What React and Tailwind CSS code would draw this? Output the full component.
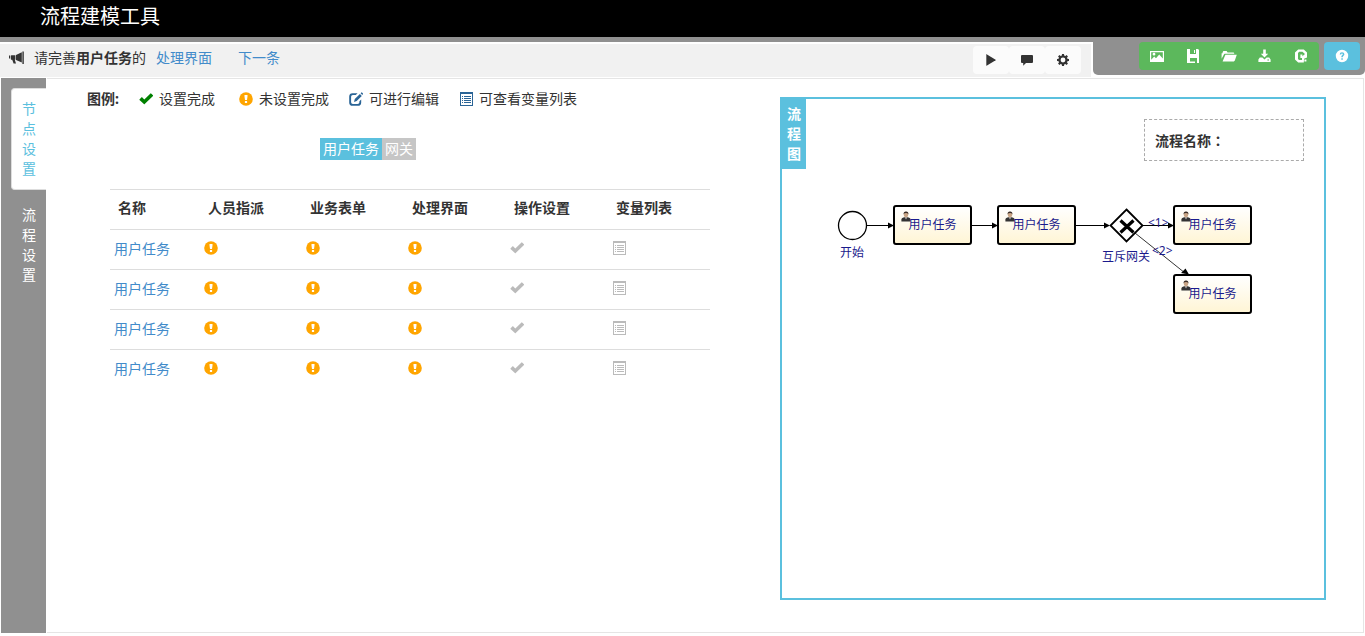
import React from "react";

function Icon({ className = "", children }) {
  return (
    <svg
      viewBox="0 0 14 14"
      aria-hidden="true"
      className={`block size-3.5 shrink-0 fill-current ${className}`}
    >
      {children}
    </svg>
  );
}

const OkIcon = ({ className }) => (
  <Icon className={className}>
    <path d="M0.5 7.4 2.5 5.3Q2.8 5 3.1 5.3L5.3 7.4 11.5 1.5Q11.8 1.2 12.1 1.5L14 3.3Q14.3 3.6 14 3.9L5.7 12Q5.3 12.4 4.9 12L0.5 8Q0.2 7.7 0.5 7.4Z" />
  </Icon>
);

const AlertIcon = ({ className }) => (
  <Icon className={className}>
    <circle cx="7" cy="7" r="6.8" />
    <path fill="#fff" d="M5.5 3H8.5V4.6L8 8H6L5.5 4.6ZM5.9 9H8.1V11H5.9Z" />
  </Icon>
);

const EditIcon = ({ className }) => (
  <Icon className={className}>
    <path d="M8.6 1.2H3.6Q0.2 1.2 0.2 4.6V10.4Q0.2 13.8 3.6 13.8H8.8Q12.2 13.8 12.2 10.4V7.4L10.4 9.2V10.2Q10.4 12 8.6 12H3.9Q2.1 12 2.1 10.2V4.8Q2.1 3 3.9 3H6.8Z" />
    <path d="M10.9 2 12.8 3.9 7.7 9 5 9.9 5.8 7.1ZM11.6 1.3 12.4 0.5Q12.7 0.2 13 0.5L14 1.5Q14.3 1.8 14 2.1L13.3 2.9Z" />
  </Icon>
);

const ListIcon = ({ className }) => (
  <Icon className={className}>
    <path fillRule="evenodd" d="M1 0H14V14H1ZM2 2V13H13V2Z" />
    <path d="M3 4H4V5H3ZM5 4H12V5H5ZM3 6H4V7H3ZM5 6H12V7H5ZM3 8H4V9H3ZM5 8H12V9H5ZM3 10H4V11H3ZM5 10H12V11H5Z" />
  </Icon>
);

const HornIcon = () => (
  <svg viewBox="0 0 16 14" aria-hidden="true" className="block h-3.5 w-4 shrink-0 fill-current">
    <path d="M14.4 0.6H15.8V13H14.4Z" />
    <path d="M13.8 1.2V11.6L8 9.1V4.1ZM3.4 4.2H7.4V8.8H6.8L8 12.6H5.6L4.2 8.8H3.4Q2.9 8.8 2.9 8.2V4.8Q2.9 4.2 3.4 4.2ZM1 4.6H2.2V7.6H1Z" />
  </svg>
);

const PlayIcon = () => (
  <Icon>
    <path d="M2.6 1.3 11.6 6.7Q12 7 11.6 7.3L2.6 12.7Q2.3 12.8 2.3 12.4V1.6Q2.3 1.2 2.6 1.3Z" />
  </Icon>
);

const CommentIcon = () => (
  <Icon>
    <path d="M2 2H12Q13 2 13 3V9Q13 10 12 10H6L3.2 12.8V10H2Q1 10 1 9V3Q1 2 2 2Z" />
  </Icon>
);

const CogIcon = () => (
  <Icon>
    <path fillRule="evenodd" d="M7 2.4A4.6 4.6 0 1 1 7 11.6A4.6 4.6 0 1 1 7 2.4ZM7 4.6A2.4 2.4 0 1 0 7 9.4A2.4 2.4 0 1 0 7 4.6Z" />
    {[0, 45, 90, 135].map((angle) => (
      <path key={angle} transform={`rotate(${angle} 7 7)`} d="M6 1H8L8.3 3.2H5.7ZM5.7 10.8H8.3L8 13H6Z" />
    ))}
  </Icon>
);

const PictureIcon = () => (
  <Icon>
    <path fillRule="evenodd" d="M0 2H14V13H0ZM1.2 3.2V10.8L4.2 7.4 6 9.2 9.2 5.6 12.8 9.4V3.2ZM4 3.8A1.4 1.4 0 1 1 4 6.6A1.4 1.4 0 1 1 4 3.8Z" />
  </Icon>
);

const FloppyIcon = () => (
  <Icon>
    <path fillRule="evenodd" d="M1 0H4V5H10V0H12L13 1V14H11V9H4V14H1ZM8 1H9V4H8Z" />
    <path d="M4 12.6H9V14H4Z" />
  </Icon>
);

const FolderIcon = () => (
  <svg viewBox="0 0 16 14" aria-hidden="true" className="block h-3.5 w-4 shrink-0 fill-current">
    <path d="M0.6 9.8V4.2H1.6V3.2L2.4 2H5.6L6.6 3.4H12.4Q13.2 3.4 13.2 4.2V4.8H3.8Q3.2 4.8 2.9 5.4Z" />
    <path d="M4.4 5.8H15.8L13.8 11.6Q13.5 12.4 12.8 12.4H1.6Z" />
  </svg>
);

const SaveIcon = () => (
  <Icon>
    <path d="M5.2 0.6H7.8V4.8H10.2L6.5 8.6 2.8 4.8H5.2Z" />
    <path fillRule="evenodd" d="M1.8 8.6H4.4L6.5 10.4 8.6 8.6H11.2L12.6 10.4V13H0.4V10.4ZM9.4 10.4V11.4H11V10.4Z" />
  </Icon>
);

const ExportIcon = () => (
  <Icon>
    <path fillRule="evenodd" d="M4.2 0.4H9.8L13 3.6V8.4L10 9.8V10.4L9.8 13.6H4.2L1 10.4V3.6ZM4 4V10L5 11H8V9H6.4V5.4H8.4V7.2L11 5 8.4 2.8H5.2Z" />
    <path d="M10.4 10.6H12.4V12.6H10.4Z" />
  </Icon>
);

const QuestionIcon = () => (
  <Icon>
    <path
      fillRule="evenodd"
      d="M7 0.8A6.2 6.2 0 1 1 7 13.2A6.2 6.2 0 1 1 7 0.8ZM4.7 5.6H6.2Q6.2 4.6 7 4.6 7.8 4.6 7.8 5.3 7.8 5.7 7 6.3 6.3 6.9 6.3 8.2H7.8Q7.8 7.4 8.6 6.8 9.4 6.1 9.4 5.2 9.4 3.3 7 3.3 4.7 3.3 4.7 5.6ZM6.3 9.2H7.8V10.7H6.3Z"
    />
  </Icon>
);

const toolButtons = [
  ["运行", PlayIcon],
  ["消息", CommentIcon],
  ["设置", CogIcon],
];

const fileButtons = [
  ["图片", PictureIcon],
  ["保存", FloppyIcon],
  ["打开", FolderIcon],
  ["下载", SaveIcon],
  ["导出", ExportIcon],
];

const columns = ["名称", "人员指派", "业务表单", "处理界面", "操作设置", "变量列表"];
const rows = ["用户任务", "用户任务", "用户任务", "用户任务"];

function UserFigure() {
  return (
    <svg viewBox="0 0 10 11" aria-hidden="true" className="absolute left-1.5 top-1 h-[11px] w-2.5">
      <path d="M0.4 10.6V8.4Q0.4 6.8 2.4 6.4L5 6 7.6 6.4Q9.6 6.8 9.6 8.4V10.6Z" fill="#333" />
      <path d="M4 6.2H6L5 8.4Z" fill="#ddd" />
      <ellipse cx="5" cy="3.6" rx="2.2" ry="2.8" fill="#c9a585" />
      <path d="M2.6 3.4Q2.3 0.4 5 0.4 7.7 0.4 7.4 3.4 6.8 2 5 2 3.2 2 2.6 3.4Z" fill="#3a2e28" />
    </svg>
  );
}

function TaskNode({ place }) {
  return (
    <div
      className={`absolute h-10 w-[79px] rounded-[3px] border-2 border-black bg-linear-to-b from-white to-[#fff5d5] text-center text-xs leading-9 ${place}`}
    >
      <UserFigure />
      <span className="relative">用户任务</span>
    </div>
  );
}

function Diagram() {
  return (
    <section className="relative min-w-0 border-2 border-[#5bc0de] text-[#1a1a8c]">
      <h2 className="w-6 p-[5px] text-sm leading-5 font-bold break-all bg-[#5bc0de] text-white">流程图</h2>
      <div className="absolute top-5 right-5 h-[42px] w-40 border border-dashed border-[#aaa] px-2.5 text-sm leading-10 font-bold text-[#333]">
        流程名称<span className="font-['Noto_Sans_CJK_TC',sans-serif]">：</span>
      </div>
      <svg viewBox="0 0 480 230" aria-hidden="true" className="absolute top-0 left-0 h-[230px] w-[480px]">
        <g fill="none" stroke="#000">
          <circle cx="70.5" cy="126.5" r="14" strokeWidth="1.3" fill="#fff" />
          <path d="M85 126.5H108M190 126.5H212M294 126.5H326M361 126.5H388" strokeWidth="1.2" />
          <path d="M353 134 403 174" strokeWidth="0.8" />
          <path d="M344.5 110.5 360.5 126.5 344.5 142.5 328.5 126.5Z" strokeWidth="1.8" fill="#fff" />
          <path d="M338.5 121.5 351.5 133.5M351.5 121.5 338.5 133.5" strokeWidth="3.2" />
        </g>
        <path d="M112 126.5 106 123.5V129.5ZM216 126.5 210 123.5V129.5ZM328 126.5 322 123.5V129.5ZM392 126.5 386 123.5V129.5ZM407 175.5 399 174 403.5 169.5Z" />
      </svg>
      <span className="absolute top-36 left-[58px] text-xs leading-5">开始</span>
      <TaskNode place="left-[111px] top-[106px]" />
      <TaskNode place="left-[215px] top-[106px]" />
      <TaskNode place="left-[391px] top-[106px]" />
      <TaskNode place="left-[391px] top-[175px]" />
      <span className="absolute top-[148px] left-[320px] text-xs leading-5">互斥网关</span>
      <span className="absolute top-[114px] left-[366px] text-xs leading-5">&lt;1&gt;</span>
      <span className="absolute top-[142px] left-[370px] text-xs leading-5">&lt;2&gt;</span>
    </section>
  );
}

function LegendItem({ icon, children, className = "" }) {
  return (
    <li className={`flex items-center gap-1.5 ${className}`}>
      {icon}
      {children}
    </li>
  );
}

export default function App() {
  return (
    <div className="flex min-h-screen flex-col bg-white pb-[3px] font-['Noto_Sans','Noto_Sans_CJK_SC',sans-serif] text-sm leading-5 text-[#333]">
      <header className="h-[37px] bg-black px-10">
        <h1 className="text-xl leading-[34px] text-white">流程建模工具</h1>
      </header>

      <div className="flex h-[41px] items-start">
        <div className="min-w-0 flex-1 border-t-[5px] border-[#909090] pt-0.5">
          <div className="mr-0.5 flex h-[33px] items-start justify-between bg-[#f1f1f1] pt-0.5 pr-2.5 pl-2">
            <div className="flex h-6 items-center">
              <HornIcon />
              <p className="ml-2.5">
                请完善<strong>用户任务</strong>的
              </p>
              <a href="#page" className="ml-2.5 text-[#428bca]">处理界面</a>
              <a href="#next" className="ml-[26px] text-[#428bca]">下一条</a>
            </div>
            <div className="flex">
              {toolButtons.map(([label, Glyph]) => (
                <button key={label} type="button" aria-label={label} className="flex h-7 w-9 items-center justify-center rounded bg-[#fbfbfb]">
                  <Glyph />
                </button>
              ))}
            </div>
          </div>
        </div>
        <div className="flex h-[38px] w-[272px] justify-end gap-[5px] rounded-b-[5px] bg-[#909090] pt-[5px] pr-[5px] text-white">
          <div className="flex h-7 overflow-hidden rounded bg-[#5cb85c]">
            {fileButtons.map(([label, Glyph]) => (
              <button key={label} type="button" aria-label={label} className="flex w-9 items-center justify-center">
                <Glyph />
              </button>
            ))}
          </div>
          <button type="button" aria-label="帮助" className="flex h-7 w-9 items-center justify-center rounded bg-[#5bc0de]">
            <QuestionIcon />
          </button>
        </div>
      </div>

      <div className="flex flex-1 gap-px px-px">
        <nav className="flex w-[45px] shrink-0 flex-col gap-1 bg-[#909090] pt-2.5 pl-2.5">
          <a href="#node" className="rounded-l border border-r-0 border-[#ddd] bg-white p-2.5 break-all text-[#5bc0de]">
            节点设置
          </a>
          <a href="#flow" className="border border-r-0 border-transparent p-2.5 break-all text-white">
            流程设置
          </a>
        </nav>

        <main className="grid min-w-0 flex-1 grid-cols-[minmax(0,623fr)_minmax(0,546fr)] gap-[70px] border border-l-0 border-[#e5e5e5] pt-[18px] pr-[37px] pb-8 pl-10">
          <section className="-mt-2">
            <div className="flex gap-5 whitespace-nowrap">
              <strong>图例:</strong>
              <ul className="flex gap-5">
                <LegendItem className="mr-1" icon={<OkIcon className="text-[#008000]" />}>设置完成</LegendItem>
                <LegendItem icon={<AlertIcon className="text-[#ffa500]" />}>未设置完成</LegendItem>
                <LegendItem icon={<EditIcon className="text-[#2a6496]" />}>可进行编辑</LegendItem>
                <LegendItem icon={<ListIcon className="text-[#2a6496]" />}>可查看变量列表</LegendItem>
              </ul>
            </div>

            <div className="mt-[29px] flex pl-[233px] whitespace-nowrap text-white">
              <button type="button" className="bg-[#5bc0de] px-[3px] py-px">用户任务</button>
              <button type="button" className="bg-[#c6c6c6] px-[3px] py-px">网关</button>
            </div>

            <div className="mt-[29px] pl-[23px]">
              <table className="w-full table-fixed border-separate border-spacing-0 text-left">
                <thead>
                  <tr>
                    {columns.map((name) => (
                      <th key={name} scope="col" className="h-10 border-t border-[#ddd] px-2 pb-1 font-bold whitespace-nowrap first:w-[15%]">
                        {name}
                      </th>
                    ))}
                  </tr>
                </thead>
                <tbody>
                  {rows.map((name, i) => (
                    <tr key={i}>
                      <td className="h-10 border-t border-[#ddd] px-1 pb-0.5 whitespace-nowrap">
                        <a href="#task" className="text-[#428bca]">{name}</a>
                      </td>
                      {[0, 1, 2].map((n) => (
                        <td key={n} className="border-t border-[#ddd] px-1 pb-1">
                          <AlertIcon className="text-[#ffa500]" />
                        </td>
                      ))}
                      <td className="border-t border-[#ddd] px-1 pb-1">
                        <OkIcon className="text-[#bbb]" />
                      </td>
                      <td className="border-t border-[#ddd] px-1 pb-1">
                        <ListIcon className="text-[#bbb]" />
                      </td>
                    </tr>
                  ))}
                </tbody>
              </table>
            </div>
          </section>

          <Diagram />
        </main>
      </div>
    </div>
  );
}
